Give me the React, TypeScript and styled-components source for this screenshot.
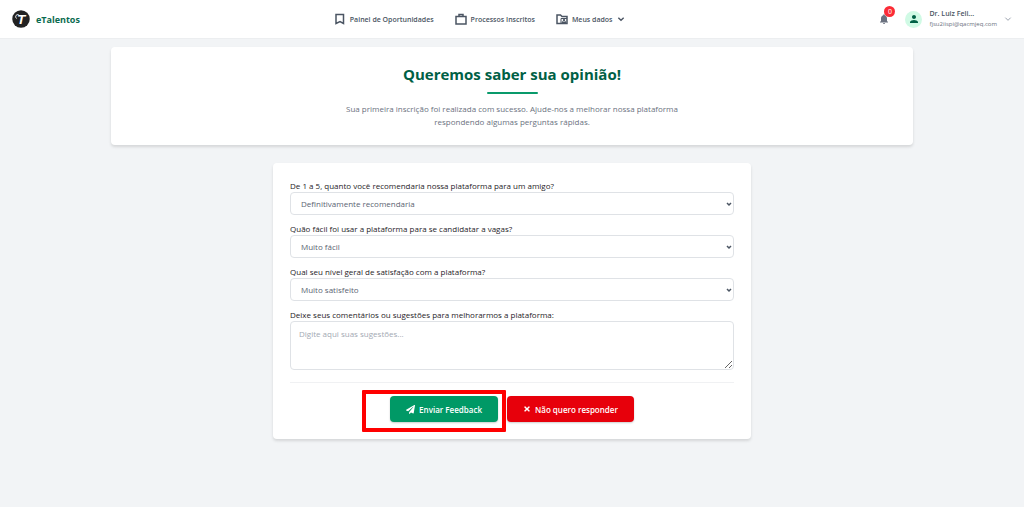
import React from "react";
import styled, { createGlobalStyle } from "styled-components";
import { FaPaperPlane, FaTimes } from "react-icons/fa";
import { MdNotifications, MdPerson } from "react-icons/md";

const GlobalStyle = createGlobalStyle`
  *, *::before, *::after { box-sizing: border-box; }
  body {
    margin: 0;
    min-height: 100vh;
    background: #f2f4f6;
    color: #1f2328;
    font-family: "Open Sans", "Noto Sans", sans-serif;
    font-size: 8px;
    line-height: 13px;
  }
  button, select, textarea { font: inherit; }
`;

const Header = styled.header`
  display: flex;
  align-items: center;
  justify-content: space-between;
  height: 39px;
  padding: 0 12px;
  background: #fff;
  border-bottom: 1px solid #eceef0;
`;

const Brand = styled.a`
  display: flex;
  align-items: center;
  gap: 6px;
  color: #0b6b50;
  font-size: 9px;
  font-weight: 700;
  text-decoration: none;
`;

const Nav = styled.nav`
  display: flex;
  align-items: center;
  gap: 21px;
`;

const NavLink = styled.a`
  display: flex;
  align-items: center;
  gap: 4px;
  color: #4b5563;
  font-size: 7px;
  font-weight: 600;
  text-decoration: none;
`;

const Account = styled.div`
  display: flex;
  align-items: center;
  gap: 15px;
`;

const BellButton = styled.button`
  position: relative;
  display: flex;
  padding: 0;
  border: 0;
  background: none;
  color: #6b7280;
`;

const Badge = styled.span`
  position: absolute;
  top: -7px;
  right: -5px;
  width: 11px;
  height: 11px;
  border-radius: 50%;
  background: #fb2c36;
  color: #fff;
  font-size: 7px;
  line-height: 11px;
  text-align: center;
`;

const UserButton = styled.button`
  display: flex;
  align-items: center;
  gap: 7px;
  padding: 0;
  border: 0;
  background: none;
  color: #9ca3af;
  text-align: left;
`;

const Avatar = styled.span`
  display: grid;
  place-items: center;
  width: 17px;
  height: 17px;
  border-radius: 50%;
  background: #d0fae5;
  color: #006045;
`;

const UserText = styled.span`
  display: flex;
  flex-direction: column;
  font-size: 6px;
  line-height: 10px;
  color: #6b7280;
`;

const UserName = styled.span`
  font-size: 7px;
  font-weight: 600;
  color: #4b5563;
`;

const Main = styled.main`
  display: flex;
  flex-direction: column;
  align-items: center;
  gap: 18px;
  padding: 8px 111px;
`;

const Card = styled.section`
  width: 100%;
  border-radius: 4px;
  background: #fff;
  box-shadow: 0 2px 3px rgba(0, 0, 0, 0.12);
`;

const Intro = styled(Card)`
  display: flex;
  flex-direction: column;
  align-items: center;
  padding: 16px 17px 17px;
  text-align: center;
`;

const Title = styled.h1`
  margin: 0;
  color: #006045;
  font-size: 15px;
  line-height: 22px;
  font-weight: 700;
`;

const Rule = styled.span`
  width: 51px;
  height: 2px;
  margin: 7px 0 8px;
  border-radius: 2px;
  background: #099a6b;
`;

const Lead = styled.p`
  max-width: 360px;
  margin: 0;
  color: #6b7280;
`;

const FormCard = styled(Card)`
  max-width: 478px;
  padding: 17px;
`;

const Field = styled.div`
  display: flex;
  flex-direction: column;
  margin-bottom: 8px;
`;

const Label = styled.label`
  line-height: 12px;
`;

const SelectBox = styled.div`
  display: grid;
  align-items: center;
  color: #4b5563;

  & > * {
    grid-area: 1 / 1;
  }

  & > svg {
    justify-self: end;
    margin-right: 2px;
    pointer-events: none;
  }
`;

const Select = styled.select`
  appearance: none;
  height: 23px;
  padding: 0 12px 0 10px;
  border: 1px solid #dfe2e6;
  border-radius: 4px;
  background: #fff;
  color: #5b6472;
`;

const Comment = styled.textarea`
  display: block;
  height: 49px;
  padding: 5px 8px;
  border: 1px solid #dfe2e6;
  border-radius: 4px;
  background: #fff;
  resize: vertical;
  &::placeholder { color: #a3a9b3; }
`;

const Actions = styled.div`
  display: flex;
  justify-content: center;
  gap: 9px;
  margin-top: 12px;
  padding-top: 13px;
  border-top: 1px solid #f0f1f3;
`;

const ActionButton = styled.button<{ $danger?: boolean }>`
  display: flex;
  align-items: center;
  justify-content: center;
  gap: 4px;
  height: 26px;
  padding: 0 16px;
  border: 0;
  border-radius: 4px;
  background: ${(p) => (p.$danger ? "#e7000b" : "#009966")};
  color: #fff;
  font-weight: 600;
  white-space: nowrap;
  box-shadow: 0 1px 2px rgba(0, 0, 0, 0.2);
`;

const Highlighted = styled.div`
  position: relative;
`;

const Highlight = styled.span`
  position: absolute;
  inset: -6px -8px -10px -28px;
  border: 4px solid #ff0000;
  border-radius: 1px;
  pointer-events: none;
`;

const Icon = ({ children, size = 12 }: { children: React.ReactNode; size?: number }) => (
  <svg width={size} height={size} viewBox="0 0 24 24" fill="none" stroke="currentColor" strokeWidth="2" aria-hidden="true">
    {children}
  </svg>
);

const Chevron = ({ weight = 3, size = 8 }: { weight?: number; size?: number }) => (
  <Icon size={size}>
    <path d="M4 8l8 8 8-8" strokeWidth={weight} />
  </Icon>
);

const Logo = () => (
  <svg width="18" height="18" viewBox="0 0 36 36" aria-hidden="true">
    <circle cx="18" cy="18" r="17.5" fill="#222" />
    <text x="18" y="28" fill="#fff" fontFamily="Liberation Sans, sans-serif" fontSize="27" fontStyle="italic" fontWeight="700" textAnchor="middle">
      T
    </text>
    <path d="M13 9c-6 0-7 5-4 8" fill="none" stroke="#fff" strokeWidth="2" />
  </svg>
);

const questions = [
  { id: "recommend", label: "De 1 a 5, quanto você recomendaria nossa plataforma para um amigo?", value: "Definitivamente recomendaria" },
  { id: "ease", label: "Quão fácil foi usar a plataforma para se candidatar a vagas?", value: "Muito fácil" },
  { id: "satisfaction", label: "Qual seu nível geral de satisfação com a plataforma?", value: "Muito satisfeito" },
];

export default function App() {
  return (
    <>
      <GlobalStyle />
      <Header>
        <Brand href="#">
          <Logo />
          eTalentos
        </Brand>
        <Nav>
          <NavLink href="#">
            <Icon>
              <path d="M4 3h15v18l-7-4-8 4z" strokeWidth="3" />
            </Icon>
            Painel de Oportunidades
          </NavLink>
          <NavLink href="#">
            <Icon>
              <path d="M2 7h20v15H2zM8 7V3h8v4" strokeWidth="3" />
            </Icon>
            Processos Inscritos
          </NavLink>
          <NavLink href="#">
            <Icon>
              <path d="M9 21H2V4h7l3 3h10v14H9" strokeWidth="3" />
              <path d="M10 21V11h12M12 19c0-4 8-4 8 0z" />
              <circle cx="16" cy="14" r="1.5" fill="currentColor" />
            </Icon>
            Meus dados
            <Chevron weight={4} />
          </NavLink>
        </Nav>
        <Account>
          <BellButton aria-label="Notificações">
            <MdNotifications size={12} />
            <Badge>0</Badge>
          </BellButton>
          <UserButton>
            <Avatar>
              <MdPerson size={12} />
            </Avatar>
            <UserText>
              <UserName>Dr. Luiz Feli...</UserName>
              fjsu2iispi@qacmjeq.com
            </UserText>
            <Chevron />
          </UserButton>
        </Account>
      </Header>
      <Main>
        <Intro>
          <Title>Queremos saber sua opinião!</Title>
          <Rule />
          <Lead>
            Sua primeira inscrição foi realizada com sucesso. Ajude-nos a melhorar nossa plataforma respondendo algumas perguntas rápidas.
          </Lead>
        </Intro>
        <FormCard as="form">
          {questions.map((q) => (
            <Field key={q.id}>
              <Label htmlFor={q.id}>{q.label}</Label>
              <SelectBox>
                <Select id={q.id}>
                  <option>{q.value}</option>
                </Select>
                <Chevron weight={6} size={6} />
              </SelectBox>
            </Field>
          ))}
          <Field>
            <Label htmlFor="comment">Deixe seus comentários ou sugestões para melhorarmos a plataforma:</Label>
            <Comment id="comment" placeholder="Digite aqui suas sugestões..." />
          </Field>
          <Actions>
            <Highlighted>
              <ActionButton type="submit">
                <FaPaperPlane size={9} />
                Enviar Feedback
              </ActionButton>
              <Highlight />
            </Highlighted>
            <ActionButton type="button" $danger>
              <FaTimes size={8} />
              Não quero responder
            </ActionButton>
          </Actions>
        </FormCard>
      </Main>
    </>
  );
}
